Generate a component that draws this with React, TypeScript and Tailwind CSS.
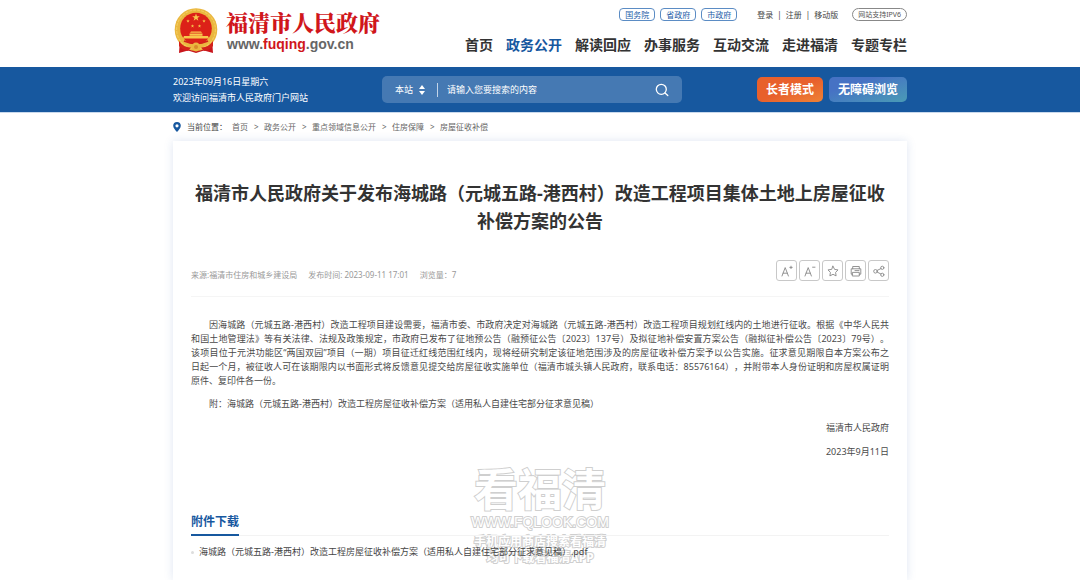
import React from "react";

const nav = ["首页", "政务公开", "解读回应", "办事服务", "互动交流", "走进福清", "专题专栏"];
const crumbs = ["首页", "政务公开", "重点领域信息公开", "住房保障", "房屋征收补偿"];
const notice = [
  "因海城路（元城五路-港西村）改造工程项目建设需要，福清市委、市政府决定对海城路（元城五路-港西村）改造工程项目规划红线内的土地进行征收。根据《中华人民共",
  "和国土地管理法》等有关法律、法规及政策规定，市政府已发布了征地预公告（融预征公告〔2023〕137号）及拟征地补偿安置方案公告（融拟征补偿公告〔2023〕79号）。",
  "该项目位于元洪功能区“两国双园”项目（一期）项目征迁红线范围红线内，现将经研究制定该征地范围涉及的房屋征收补偿方案予以公告实施。征求意见期限自本方案公布之",
  "日起一个月，被征收人可在该期限内以书面形式将反馈意见提交给房屋征收实施单位（福清市城头镇人民政府，联系电话：85576164），并附带本人身份证明和房屋权属证明",
  "原件、复印件各一份。",
];
const STAR = "M0,-1 L0.24,-0.32 L0.95,-0.31 L0.38,0.12 L0.59,0.81 L0,0.4 L-0.59,0.81 L-0.38,0.12 L-0.95,-0.31 L-0.24,-0.32 Z";

function Emblem() {
  return (
    <svg viewBox="0 0 44 46" className="h-[46px] w-11 shrink-0" aria-hidden="true">
      <path d="M6 31 L5 45 L14 42.5 L22 45 L30 42.5 L39 45 L38 31 Z" fill="#c8161d" />
      <circle cx="22" cy="21.5" r="21.3" fill="#eab73f" />
      <circle cx="22" cy="21.5" r="19.4" fill="none" stroke="#f3cb5c" strokeWidth="1.2" strokeDasharray="3 1" />
      <circle cx="22" cy="20.5" r="15.8" fill="#dc2118" />
      <g fill="#f8c84c">
        <path d={STAR} transform="translate(22 9.5) scale(4)" />
        <path d={STAR} transform="translate(14 13) scale(1.8)" />
        <path d={STAR} transform="translate(30 13) scale(1.8)" />
        <path d={STAR} transform="translate(18.5 18) scale(1.8)" />
        <path d={STAR} transform="translate(25.5 18) scale(1.8)" />
        <path d="M16 24.8 L17 23.5 L27 23.5 L28 24.8 Z M15.5 25.4 H28.5 V27.8 H15.5 Z M10 28 H34 L35 30.5 H9 Z" />
      </g>
      <path d="M10 33 Q22 38 34 33" fill="none" stroke="#d3211b" strokeWidth="1.8" />
      <circle cx="22" cy="39" r="4.4" fill="#eab73f" />
      <circle cx="22" cy="39" r="2" fill="#d9892b" />
      <path d="M5 33 Q10 40 17 39.5 L14 43 Q8 42 5 38 Z M39 33 Q34 40 27 39.5 L30 43 Q36 42 39 38 Z" fill="#d3211b" />
    </svg>
  );
}

function ToolButton({ label, children }: { label: string; children: React.ReactNode }) {
  return (
    <button
      type="button"
      aria-label={label}
      className="flex h-[21px] w-[21px] items-center justify-center rounded-[3px] border border-[#c8c8c8] bg-white"
    >
      <svg viewBox="0 0 14 14" className="h-3.5 w-3.5" fill="none" stroke="#888" strokeWidth="0.9" strokeLinejoin="round" strokeLinecap="round">
        {children}
      </svg>
    </button>
  );
}

export default function App() {
  return (
    <div
      lang="zh-CN"
      className="flex min-h-screen flex-col bg-white font-['Noto_Sans','Noto_Sans_CJK_SC',sans-serif] text-[#444] [text-spacing-trim:space-all]"
    >
      <header className="mx-auto flex h-[67px] w-full max-w-[734px] justify-between">
        <a href="#" className="flex items-start gap-2 pt-2 pl-px">
          <Emblem />
          <span className="flex flex-col">
            <span className="font-['Noto_Serif_CJK_SC','Noto_Sans_CJK_SC',serif] text-[22px] leading-7 font-black text-[#d0161b]">
              福清市人民政府
            </span>
            <span className="pl-px font-['Liberation_Sans',sans-serif] text-sm leading-4 font-bold text-[#666]">
              www.<span className="text-[#d0161b]">fuqing</span>.gov.cn
            </span>
          </span>
        </a>
        <div className="flex flex-col items-end">
          <div className="flex h-7 items-center text-[8px] leading-[11px]">
            <div className="flex gap-[5px] text-[#2560a8]">
              {["国务院", "省政府", "市政府"].map((t) => (
                <a key={t} href="#" className="rounded-[4px] border border-[#5b8cc4] px-[5px]">
                  {t}
                </a>
              ))}
            </div>
            <div className="mr-[14px] ml-5 flex gap-1 text-[#444]">
              <a href="#">登录</a>
              <span>|</span>
              <a href="#">注册</a>
              <span>|</span>
              <a href="#">移动版</a>
            </div>
            <a href="#" className="rounded-full border border-[#888] px-[5px] text-[7px] text-[#555]">
              网站支持IPV6
            </a>
          </div>
          <nav className="flex gap-[13px] pt-[7px] text-sm leading-5 font-bold text-[#333]">
            {nav.map((t, i) => (
              <a key={t} href="#" className={i === 1 ? "text-[#17589f]" : ""}>
                {t}
              </a>
            ))}
          </nav>
        </div>
      </header>

      <div className="border-b border-[#c9d9ec] bg-[#17589f]">
        <div className="mx-auto flex h-[45px] w-full max-w-[734px] items-center text-[9px] text-white">
          <div className="w-[209px] leading-4">
            <p>2023年09月16日星期六</p>
            <p>欢迎访问福清市人民政府门户网站</p>
          </div>
          <form className="flex h-[27px] w-[300px] items-center rounded-[5px] bg-[#4579b3] pr-[13px] pl-[13px]">
            <label className="flex items-center gap-1">
              <select aria-label="搜索范围" className="w-5 appearance-none bg-transparent">
                <option>本站</option>
              </select>
              <svg viewBox="0 0 6 10" className="h-2.5 w-1.5" fill="#fff" aria-hidden="true">
                <path d="M3 0 L6 4 H0 Z M3 10 L6 6 H0 Z" />
              </svg>
            </label>
            <span className="mr-[9px] ml-3 h-[14px] w-px bg-[#c3d4e8]" />
            <input
              aria-label="搜索"
              placeholder="请输入您要搜索的内容"
              className="min-w-0 flex-1 bg-transparent outline-none placeholder:text-white"
            />
            <button type="button" aria-label="提交搜索">
              <svg viewBox="0 0 14 14" className="h-3.5 w-3.5" fill="none" stroke="#fff" strokeWidth="1.3" strokeLinecap="round">
                <circle cx="6.3" cy="6.3" r="5" />
                <path d="M10 10 L12.8 12.6" />
              </svg>
            </button>
          </form>
          <div className="ml-auto flex gap-[6px] text-xs leading-[25px] font-bold">
            <button type="button" className="rounded-[5px] bg-linear-to-br from-[#e8602c] from-50% to-[#ee8236] px-[9px]">
              长者模式
            </button>
            <button type="button" className="rounded-[5px] bg-linear-to-br from-[#4672c4] from-30% to-[#4a9bb5] px-[9px]">
              无障碍浏览
            </button>
          </div>
        </div>
      </div>

      <div className="mx-auto flex h-7 w-full max-w-[734px] items-center text-[8px] text-[#666]">
        <svg viewBox="0 0 8 10" className="h-2.5 w-2" aria-hidden="true">
          <path fillRule="evenodd" fill="#17589f" d="M4 0 A3.8 3.8 0 0 1 7.8 3.8 C7.8 6 5.5 8.5 4 10 C2.5 8.5 0.2 6 0.2 3.8 A3.8 3.8 0 0 1 4 0 Z M4 2.2 A1.6 1.6 0 1 0 4 5.4 A1.6 1.6 0 1 0 4 2.2 Z" />
        </svg>
        <span className="ml-[6px] w-[45px] text-[#444]">当前位置：</span>
        <nav className="flex gap-[6px]">
          {crumbs.map((t, i) => (
            <React.Fragment key={t}>
              {i > 0 && <span className="w-1">&gt;</span>}
              <a href="#">{t}</a>
            </React.Fragment>
          ))}
        </nav>
      </div>

      <main className="relative mx-auto w-full max-w-[734px] flex-1 bg-white px-[18px] pt-[38px] pb-5 shadow-[0_0_9px_rgba(40,90,170,0.15)]">
        <div
          className="pointer-events-none absolute top-[323px] left-1/2 flex -translate-x-1/2 flex-col items-center font-bold whitespace-nowrap text-white [-webkit-text-stroke:2px_#cfcfcf] [paint-order:stroke_fill]"
        >
          <span className="text-[44px] leading-[50px]">看福清</span>
          <span className="font-['Liberation_Sans',sans-serif] text-sm leading-4 font-normal">WWW.FQLOOK.COM</span>
          <span className="mt-1 text-xs leading-4">手机应用商店搜索看福清</span>
          <span className="text-xs leading-4">均可下载看福清APP</span>
        </div>

        <h1 className="text-center text-lg leading-7 font-bold text-[#333]">
          福清市人民政府关于发布海城路（元城五路-港西村）改造工程项目集体土地上房屋征收补偿方案的公告
        </h1>
        <div className="mt-[25px] flex justify-between border-b border-[#f5f5f5] pb-[15px]">
          <div className="flex items-center gap-[11px] pt-2 text-[8px] text-[#999]">
            <span>来源:福清市住房和城乡建设局</span>
            <span>发布时间: 2023-09-11 17:01</span>
            <span>浏览量：7</span>
          </div>
          <div className="flex gap-0.5">
            <ToolButton label="放大字体">
              <path d="M2 12 L5.2 3.6 L8.4 12 M3.1 9.2 H7.3 M9.8 3.4 H12.2 M11 2.2 V4.6" />
            </ToolButton>
            <ToolButton label="缩小字体">
              <path d="M2 12 L5.2 3.6 L8.4 12 M3.1 9.2 H7.3 M9.6 3.2 H12" />
            </ToolButton>
            <ToolButton label="收藏">
              <path d="M7 2.2 L8.6 5.4 L12 5.9 L9.6 8.4 L10.1 11.9 L7 10.3 L3.9 11.9 L4.4 8.4 L2 5.9 L5.4 5.4 Z" />
            </ToolButton>
            <ToolButton label="打印">
              <path d="M3.7 4.8 V2.5 H10.3 V4.8 M3.7 10.2 H2.2 V4.8 H11.8 V10.2 H10.3 M3.7 8.4 H10.3 V12 H3.7 Z M6 6.6 H10" />
            </ToolButton>
            <ToolButton label="分享">
              <circle cx="3.5" cy="7.3" r="1.8" />
              <circle cx="10.3" cy="3.8" r="1.6" />
              <circle cx="10.3" cy="10.8" r="1.6" />
              <path d="M5.2 6.4 L8.9 4.6 M5.2 8.1 L8.9 10" />
            </ToolButton>
          </div>
        </div>

        <article className="relative mt-[21px] text-[9px] leading-[14px] text-[#4a4a4a]">
          <p>
            {notice.map((line, i) => (
              <span
                key={line}
                className={
                  i === 0
                    ? "block indent-[2em] [text-align-last:justify]"
                    : i === notice.length - 1
                      ? "block"
                      : "block [text-align-last:justify]"
                }
              >
                {line}
              </span>
            ))}
          </p>
          <p className="mt-[9px] indent-[2em]">
            附：海城路（元城五路-港西村）改造工程房屋征收补偿方案（适用私人自建住宅部分征求意见稿）
          </p>
          <p className="mt-[10px] text-right">福清市人民政府</p>
          <p className="mt-[10px] text-right">2023年9月11日</p>
        </article>

        <section className="relative mt-[51px]">
          <div className="flex border-b border-[#f3f3f3]">
            <h2 className="-mb-px border-b-2 border-[#17589f] text-xs leading-6 font-bold text-[#17589f]">
              附件下载
            </h2>
          </div>
          <ul className="mt-[9px] text-[9px] leading-[14px]">
            <li className="flex items-center gap-[5px]">
              <span className="h-[3px] w-[3px] rounded-full bg-[#ddd]" />
              <a href="#">海城路（元城五路-港西村）改造工程房屋征收补偿方案（适用私人自建住宅部分征求意见稿）.pdf</a>
            </li>
          </ul>
        </section>
      </main>
    </div>
  );
}
